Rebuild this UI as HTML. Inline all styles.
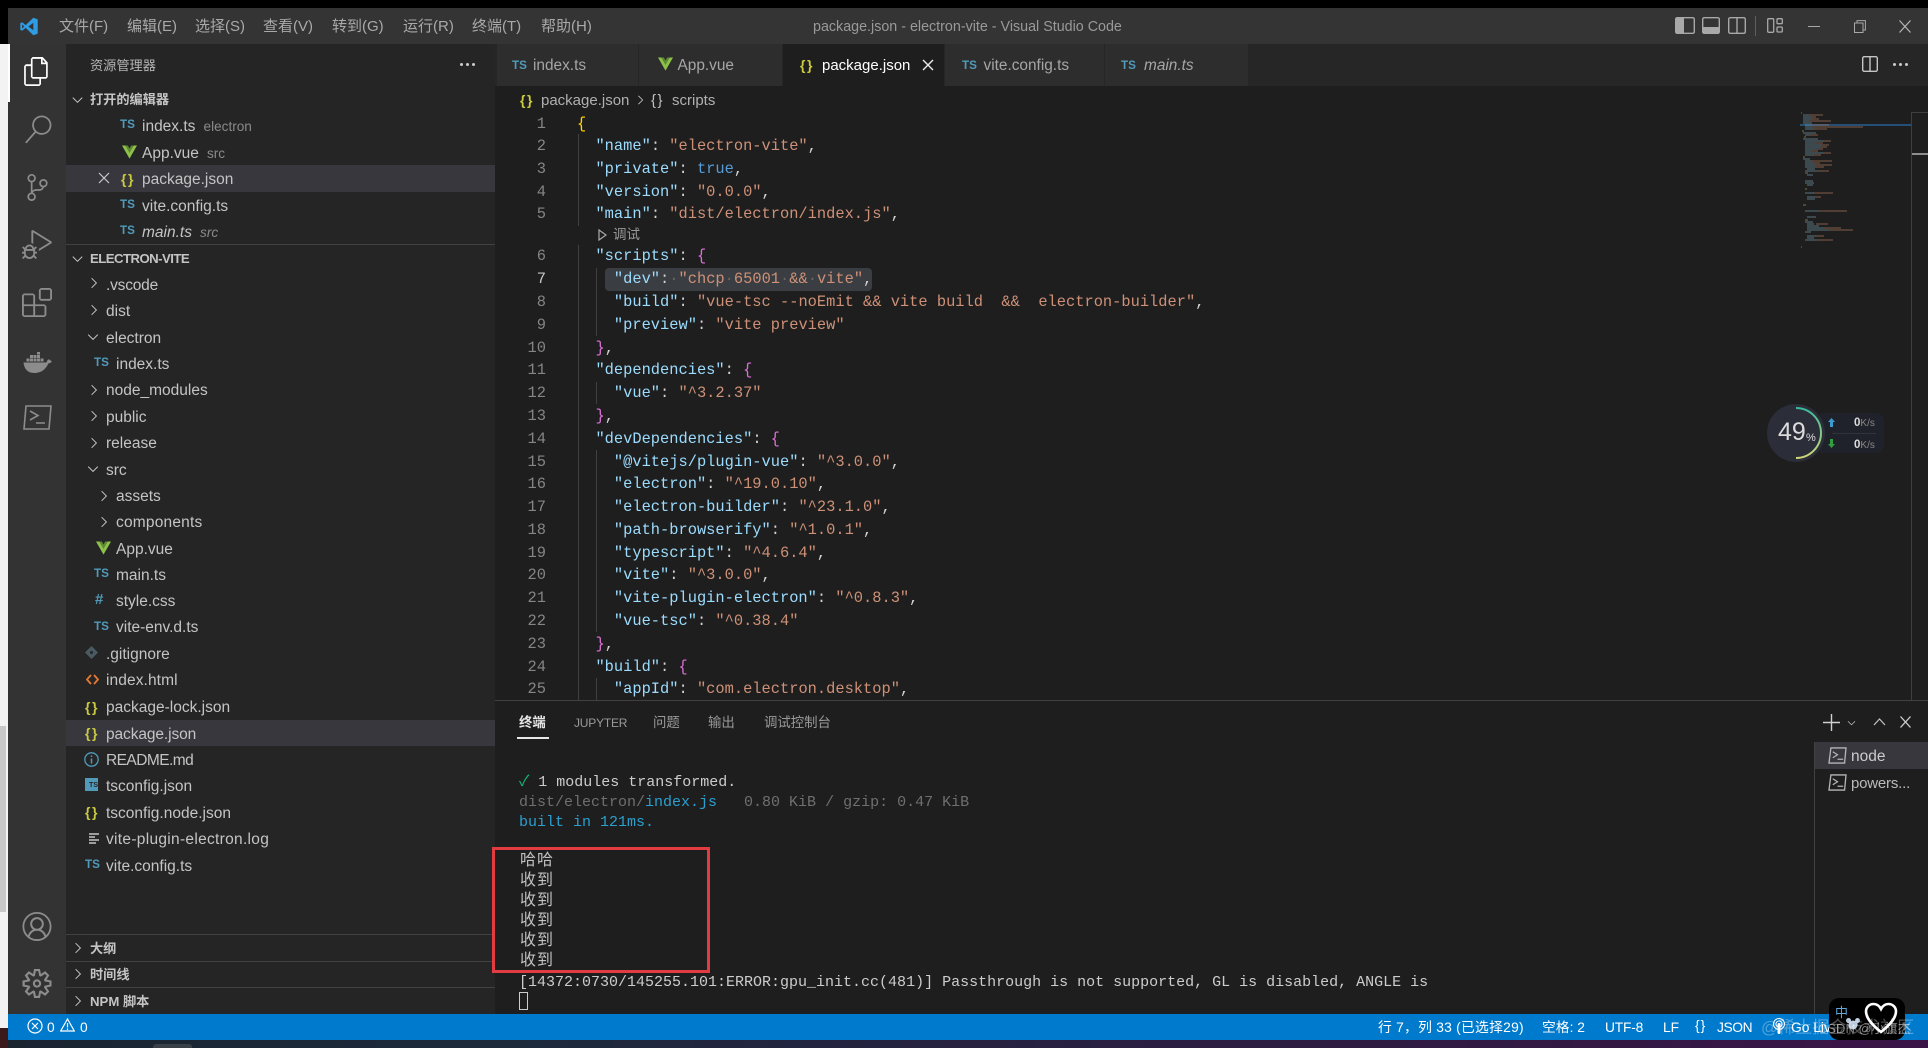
<!DOCTYPE html>
<html lang="zh-CN"><head><meta charset="utf-8"><title>package.json - electron-vite - Visual Studio Code</title>
<style>
*{box-sizing:border-box}
html,body{margin:0;padding:0;width:1928px;height:1048px;overflow:hidden;background:#000}
#a{position:relative;width:1928px;height:1048px;overflow:hidden;font-family:"Liberation Sans","Noto Sans CJK SC",sans-serif;color:#ccc}
#a div,#a span.x,#a svg{position:absolute}
.m{top:16px;font-size:15px;line-height:22px;color:#a9a9a9;white-space:nowrap}
.tab{top:44px;height:42px;background:#2d2d2d}
.tt{top:55px;font-size:15.4px;line-height:22px;color:#a6a6a6;white-space:nowrap}
.ts{font:bold 11.7px/16px "Liberation Sans",sans-serif;color:#519aba;white-space:nowrap;margin-top:1px}
.br{font:bold 14px/18px "Liberation Sans",sans-serif;color:#cbcb41;letter-spacing:1.5px;white-space:nowrap;margin-top:1px}
.t{font-size:15.5px;line-height:26px;height:26px;color:#c4c4c4;white-space:nowrap;margin-top:1px}
.h{font-size:13.2px;line-height:20px;font-weight:bold;color:#c4c4c4;white-space:nowrap;margin-top:1px}
.d{color:#8a8a8a;font-size:13.6px}
.c,.n{font-family:"Liberation Mono","Noto Sans CJK SC",monospace;font-size:15.38px;line-height:20px;white-space:pre;color:#d4d4d4;margin-top:.6px}
.c{left:577px}
.n{left:500px;width:46px;text-align:right;color:#858585}
.k{color:#9cdcfe}.s{color:#ce9178}.q{color:#ffd700}.o{color:#da70d6}.u{color:#569cd6}.w{color:#666}
.g{width:1px;background:#404040}
.v{font-family:"Liberation Mono","Noto Sans CJK SC",monospace;font-size:15px;line-height:20px;white-space:pre;color:#cccccc;left:519px;margin-top:1px}
.cj{left:520px;font-size:16px;letter-spacing:1px;color:#c0c0c0}
.pt{top:713px;font-size:13.4px;line-height:20px;color:#9a9a9a;white-space:nowrap}
.st{top:1018px;font-size:13.8px;line-height:20px;color:#fff;white-space:nowrap}
.sec{left:66px;width:429px;height:1px;background:#414141}
</style></head><body><div id="a">
<svg width="0" height="0" style="left:0;top:0"><defs>
<symbol id="cr" viewBox="0 0 10 14"><path d="M2 1l6 6-6 6" fill="none" stroke="#c5c5c5" stroke-width="1.2"/></symbol>
<symbol id="cd" viewBox="0 0 14 10"><path d="M1 2l6 6 6-6" fill="none" stroke="#c5c5c5" stroke-width="1.2"/></symbol>
<symbol id="vue" viewBox="0 0 16 14"><path d="M0 0h3.6L8 7.6 12.4 0H16L8 14z" fill="#8dc149"/><path d="M3.6 0h2.6L8 3.2 9.8 0h2.6L8 7.6z" fill="#5f8a33"/></symbol>
<symbol id="term" viewBox="0 0 20 18"><path d="M3 1h16l-1.5 16H1z" fill="none" stroke="#b5b5b5" stroke-width="1.4"/><path d="M5 5l5 3.2-5 3.2M10 13h6" fill="none" stroke="#b5b5b5" stroke-width="1.3"/></symbol>
</defs></svg>

<!-- outer window edges -->
<div style="left:0;top:44px;width:8px;height:986px;background:#f3f3f3"></div>
<div style="left:0;top:726px;width:6px;height:186px;background:#c8c8c8"></div>
<div style="left:0;top:1028px;width:8px;height:20px;background:#3a1a1a"></div>
<div style="left:8px;top:1040px;width:1920px;height:8px;background:linear-gradient(90deg,#1a2431 0%,#1c2a3c 25%,#2a1f42 60%,#3a1446 100%)"></div>
<div style="left:153px;top:1044px;width:39px;height:4px;background:#3a4048;border-radius:3px 3px 0 0"></div>

<!-- title bar -->
<div style="left:8px;top:8px;width:1920px;height:36px;background:#343434"></div>
<svg style="left:19px;top:17px" width="20" height="19" viewBox="0 0 24 24"><path d="M17.5 1L7.8 10.2 3.3 6.6 1 7.8v8.4l2.3 1.2 4.5-3.6 9.7 9.2L23 21V3z" fill="#2f9de4"/><path d="M17.5 7.2L11.2 12l6.3 4.8z" fill="#343434"/><path d="M3.3 9.3L6 12l-2.7 2.7z" fill="#343434"/></svg>
<div class="m" style="left:59px">文件(F)</div>
<div class="m" style="left:127px">编辑(E)</div>
<div class="m" style="left:195px">选择(S)</div>
<div class="m" style="left:263px">查看(V)</div>
<div class="m" style="left:332px">转到(G)</div>
<div class="m" style="left:403px">运行(R)</div>
<div class="m" style="left:472px">终端(T)</div>
<div class="m" style="left:541px">帮助(H)</div>
<div style="left:813px;top:16px;font-size:14.3px;line-height:22px;color:#999;white-space:nowrap">package.json - electron-vite - Visual Studio Code</div>
<svg style="left:1675px;top:17px" width="20" height="17" viewBox="0 0 20 17"><rect x=".7" y=".7" width="18.6" height="15.6" rx="1.5" fill="none" stroke="#a8a8a8" stroke-width="1.4"/><rect x="1" y="1" width="8" height="15" fill="#a8a8a8"/></svg>
<svg style="left:1702px;top:17px" width="18" height="17" viewBox="0 0 18 17"><rect x=".7" y=".7" width="16.6" height="15.6" rx="1.5" fill="none" stroke="#a8a8a8" stroke-width="1.4"/><rect x="1" y="10" width="16" height="6" fill="#a8a8a8"/></svg>
<svg style="left:1728px;top:17px" width="18" height="17" viewBox="0 0 18 17"><rect x=".7" y=".7" width="16.6" height="15.6" rx="1.5" fill="none" stroke="#a8a8a8" stroke-width="1.4"/><path d="M9 1v15" stroke="#a8a8a8" stroke-width="1.4"/></svg>
<div style="left:1755px;top:16px;width:1px;height:20px;background:#5f5f5f"></div>
<svg style="left:1767px;top:18px" width="16" height="15" viewBox="0 0 16 15"><rect x=".7" y=".7" width="6" height="13.6" rx="1" fill="none" stroke="#a8a8a8" stroke-width="1.3"/><rect x="10" y=".7" width="5.3" height="5" rx="1" fill="none" stroke="#a8a8a8" stroke-width="1.3"/><rect x="10" y="9" width="5.3" height="5" rx="1" fill="none" stroke="#a8a8a8" stroke-width="1.3"/></svg>
<div style="left:1808px;top:26px;width:12px;height:1px;background:#a8a8a8"></div>
<svg style="left:1854px;top:20px" width="12" height="13" viewBox="0 0 12 13"><rect x=".5" y="3" width="8.5" height="9.5" fill="none" stroke="#a8a8a8"/><path d="M3 3V.6h8.4V10H9" fill="none" stroke="#a8a8a8"/></svg>
<svg style="left:1899px;top:20px" width="12" height="13" viewBox="0 0 12 13"><path d="M.5.5l11 12M11.5.5l-11 12" stroke="#b5b5b5" stroke-width="1.2"/></svg>

<!-- activity bar -->
<div style="left:8px;top:44px;width:58px;height:970px;background:#333"></div>
<div style="left:8px;top:44px;width:2px;height:58px;background:#fff"></div>
<svg style="left:23px;top:57px" width="27" height="29" viewBox="0 0 24 24" preserveAspectRatio="none"><path fill="#fff" d="M17.5 0h-9L7 1.5V6H2.5L1 7.5v15.07L2.5 24h12.07L16 22.57V18h4.7l1.3-1.43V4.5L17.5 0zm0 2.12l2.38 2.38H17.5V2.12zm-3 20.38h-12v-15H7v9.07L8.5 18h6v4.5zm6-6h-12v-15H16V6h4.5v10.5z"/></svg>
<svg style="left:24px;top:115px" width="28" height="29" viewBox="0 0 24 24"><path fill="#8c8c8c" d="M15.25 0a8.25 8.25 0 0 0-6.18 13.72L1 22.88l1.12 1 8.05-9.12A8.251 8.251 0 1 0 15.25.01V0zm0 15a6.75 6.75 0 1 1 0-13.5 6.75 6.75 0 0 1 0 13.5z"/></svg>
<svg style="left:24px;top:173px" width="27" height="29" viewBox="0 0 24 24"><path fill="#8c8c8c" d="M21.007 8.222A3.738 3.738 0 0 0 15.045 5.2a3.737 3.737 0 0 0 1.156 6.583 2.988 2.988 0 0 1-2.668 1.67h-2.99a4.456 4.456 0 0 0-2.989 1.165V7.4a3.737 3.737 0 1 0-1.494 0v9.117a3.776 3.776 0 1 0 1.816.099 2.99 2.99 0 0 1 2.668-1.667h2.99a4.484 4.484 0 0 0 4.223-3.039 3.736 3.736 0 0 0 3.25-3.687zM4.565 3.738a2.242 2.242 0 1 1 4.484 0 2.242 2.242 0 0 1-4.484 0zm4.484 16.441a2.242 2.242 0 1 1-4.484 0 2.242 2.242 0 0 1 4.484 0zm8.221-9.715a2.242 2.242 0 1 1 0-4.485 2.242 2.242 0 0 1 0 4.485z"/></svg>
<svg style="left:22px;top:230px" width="30" height="29" viewBox="0 0 24 24" preserveAspectRatio="none"><path fill="#8c8c8c" d="M10.94 13.5l-1.32 1.32a3.73 3.73 0 0 0-7.24 0L1.06 13.5 0 14.56l1.72 1.72-.22.22V18H0v1.5h1.5v.08c.077.489.214.966.41 1.42L0 22.94 1.06 24l1.65-1.65A4.308 4.308 0 0 0 6 24a4.31 4.31 0 0 0 3.29-1.65L10.94 24 12 22.94 10.09 21c.198-.464.336-.951.41-1.45v-.1H12V18h-1.5v-1.5l-.22-.22L12 14.56l-1.06-1.06zM6 13.5a2.25 2.25 0 0 1 2.25 2.25h-4.5A2.25 2.25 0 0 1 6 13.5zm3 6a3.33 3.33 0 0 1-3 3 3.33 3.33 0 0 1-3-3v-2.25h6v2.25zm14.76-9.9v1.26L13.5 17.37V15.6l8.5-5.37L9 2v9.46a5.07 5.07 0 0 0-1.5-.72V.63L8.64 0l15.12 9.6z"/></svg>
<svg style="left:22px;top:288px" width="30" height="29" viewBox="0 0 24 24" preserveAspectRatio="none"><path fill="#8c8c8c" d="M13.5 1.5L15 0h7.5L24 1.5V9l-1.5 1.5H15L13.5 9V1.5zm1.5 0V9h7.5V1.5H15zM0 15V6l1.5-1.5H9L10.5 6v7.5H18l1.5 1.5v7.5L18 24H1.5L0 22.5V15zm9-1.5V6H1.5v7.5H9zM9 15H1.5v7.5H9V15zm1.5 7.5H18V15h-7.5v7.5z"/></svg>
<svg style="left:23px;top:352px" width="29" height="21" viewBox="0 0 29 21"><path fill="#8c8c8c" d="M.5 10.5h22.3c1-.2 1.5-1.2 1.5-2.3l1.5-1 3 2.2c-.7 1.3-2 2-3.5 2.1C23 17 18.500 21 11 21 4.500 21 1 16.500.5 10.500z"/><g fill="#8c8c8c"><rect x="3.500" y="6.500" width="3" height="3"/><rect x="7" y="6.500" width="3" height="3"/><rect x="10.500" y="6.500" width="3" height="3"/><rect x="14" y="6.500" width="3" height="3"/><rect x="7" y="3" width="3" height="3"/><rect x="10.500" y="3" width="3" height="3"/><rect x="14" y="3" width="3" height="3"/><rect x="14" y="0" width="3" height="2.500"/><rect x="17.500" y="6.500" width="3" height="3"/></g></svg>
<svg style="left:23px;top:405px" width="29" height="25" viewBox="0 0 29 25"><path d="M3 1h25l-2 23H1z" fill="none" stroke="#8c8c8c" stroke-width="1.6"/><path d="M7 6l8 4.500-8 4.500M13 18h9" fill="none" stroke="#8c8c8c" stroke-width="1.6"/></svg>
<svg style="left:22px;top:912px" width="30" height="29" viewBox="0 0 16 16"><path fill="#8c8c8c" d="M16 7.992C16 3.58 12.416 0 8 0S0 3.58 0 7.992c0 2.43 1.104 4.62 2.832 6.09.016.016.032.016.032.032.144.112.288.224.448.336.08.048.144.112.224.175A7.98 7.98 0 0 0 8.016 16a7.98 7.98 0 0 0 4.48-1.375c.08-.048.144-.111.224-.16.144-.111.304-.223.448-.335.016-.016.032-.016.032-.032 1.696-1.487 2.8-3.676 2.8-6.106zm-8 7.001c-1.504 0-2.88-.48-4.016-1.279.016-.128.048-.255.08-.383a4.17 4.17 0 0 1 .416-.991c.176-.304.384-.576.64-.816.24-.24.528-.463.816-.639.304-.176.624-.304.976-.4A4.15 4.15 0 0 1 8 10.342a4.185 4.185 0 0 1 2.928 1.166c.368.368.656.8.864 1.295.112.288.192.592.24.911A7.03 7.03 0 0 1 8 14.993zm-2.448-7.4a2.49 2.49 0 0 1-.208-1.024c0-.351.064-.703.208-1.023.144-.32.336-.607.576-.847.24-.24.528-.431.848-.575.32-.144.672-.208 1.024-.208.368 0 .704.064 1.024.208.32.144.608.336.848.575.24.24.432.528.576.847.144.32.208.672.208 1.023 0 .368-.064.704-.208 1.023a2.84 2.84 0 0 1-.576.848 2.84 2.84 0 0 1-.848.575 2.715 2.715 0 0 1-2.064 0 2.84 2.84 0 0 1-.848-.575 2.526 2.526 0 0 1-.56-.848zm7.424 5.306c0-.032-.016-.048-.016-.08a5.22 5.22 0 0 0-.688-1.406 4.883 4.883 0 0 0-1.088-1.135 5.207 5.207 0 0 0-1.04-.608 2.82 2.82 0 0 0 .464-.383 4.2 4.2 0 0 0 .624-.784 3.624 3.624 0 0 0 .528-1.934 3.71 3.71 0 0 0-.288-1.47 3.799 3.799 0 0 0-.816-1.199 3.845 3.845 0 0 0-1.2-.8 3.72 3.72 0 0 0-1.472-.287 3.72 3.72 0 0 0-1.472.288 3.631 3.631 0 0 0-1.2.815 3.84 3.84 0 0 0-.8 1.199 3.71 3.71 0 0 0-.288 1.47c0 .352.048.688.144 1.007.096.336.224.64.4.927.16.288.384.544.624.784.144.144.304.271.48.383a5.12 5.12 0 0 0-1.04.624c-.416.32-.784.703-1.088 1.119a4.999 4.999 0 0 0-.688 1.406c-.016.032-.016.064-.016.08C1.776 11.636.992 9.91.992 7.992.992 4.14 4.144.991 8 .991s7.008 3.149 7.008 7.001a6.96 6.96 0 0 1-2.032 4.907z"/></svg>
<svg style="left:22px;top:969px" width="30" height="29" viewBox="0 0 24 24"><path fill="#8c8c8c" d="M19.85 8.75l4.15.83v4.84l-4.15.83 2.35 3.52-3.43 3.43-3.52-2.35-.83 4.15H9.58l-.83-4.15-3.52 2.35-3.43-3.43 2.35-3.52L0 14.42V9.58l4.15-.83L1.8 5.23 5.23 1.8l3.52 2.35L9.58 0h4.84l.83 4.15 3.52-2.35 3.43 3.43-2.35 3.52zm-1.57 5.07l4-.81v-2l-4-.81-.54-1.3 2.29-3.43-1.43-1.43-3.43 2.29-1.3-.54-.81-4h-2l-.81 4-1.3.54-3.43-2.29-1.43 1.43L6.38 8.9l-.54 1.3-4 .81v2l4 .81.54 1.3-2.29 3.43 1.43 1.43 3.43-2.29 1.3.54.81 4h2l.81-4 1.3-.54 3.43 2.29 1.43-1.43-2.29-3.43.54-1.3zm-8.186-4.672A3.43 3.43 0 0 1 12 8.57 3.44 3.44 0 0 1 15.43 12a3.43 3.43 0 1 1-5.336-2.852zm.956 4.274c.281.188.612.288.95.288A1.7 1.7 0 0 0 13.71 12a1.71 1.71 0 1 0-2.66 1.422z"/></svg>

<!-- sidebar -->
<div style="left:66px;top:44px;width:429px;height:970px;background:#252526"></div>
<div style="left:90px;top:54.500px;font-size:13.2px;line-height:22px;color:#b5b5b5">资源管理器</div>
<div style="left:460px;top:62.500px;width:3px;height:3px;background:#ccc;border-radius:50%"></div>
<div style="left:466px;top:62.500px;width:3px;height:3px;background:#ccc;border-radius:50%"></div>
<div style="left:472px;top:62.500px;width:3px;height:3px;background:#ccc;border-radius:50%"></div>
<svg style="left:72px;top:96px" width="11" height="8"><use href="#cd"/></svg>
<div class="h" style="left:90px;top:89px">打开的编辑器</div>
<div class="ts" style="left:120px;top:116px">TS</div><div class="t" style="left:142px;top:112.500px">index.ts <span class="d">&nbsp;electron</span></div>
<svg style="left:122px;top:145px" width="15" height="14"><use href="#vue"/></svg><div class="t" style="left:142px;top:139.500px">App.vue <span class="d">&nbsp;src</span></div>
<div style="left:66px;top:165px;width:429px;height:27px;background:#37373d"></div>
<svg style="left:98px;top:172px" width="12" height="12" viewBox="0 0 12 12"><path d="M1 1l10 10M11 1L1 11" stroke="#ccc" stroke-width="1.2"/></svg>
<div class="br" style="left:121px;top:169px">{}</div><div class="t" style="left:142px;top:165.500px">package.json</div>
<div class="ts" style="left:120px;top:196px">TS</div><div class="t" style="left:142px;top:192.500px">vite.config.ts</div>
<div class="ts" style="left:120px;top:222px">TS</div><div class="t" style="left:142px;top:219px"><i>main.ts</i> <span class="d"><i>&nbsp;src</i></span></div>
<div class="sec" style="top:244px"></div>
<svg style="left:72px;top:255px" width="11" height="8"><use href="#cd"/></svg>
<div class="h" style="left:90px;top:248px;letter-spacing:-.55px">ELECTRON-VITE</div>

<svg style="left:90px;top:277px" width="8" height="12"><use href="#cr"/></svg><div class="t" style="left:106px;top:271.500px;letter-spacing:-.2px">.vscode</div>
<svg style="left:90px;top:304px" width="8" height="12"><use href="#cr"/></svg><div class="t" style="left:106px;top:298px">dist</div>
<svg style="left:87px;top:333px" width="12" height="8"><use href="#cd"/></svg><div class="t" style="left:106px;top:324.500px">electron</div>
<div class="ts" style="left:94px;top:354px">TS</div><div class="t" style="left:116px;top:350.500px">index.ts</div>
<svg style="left:90px;top:384px" width="8" height="12"><use href="#cr"/></svg><div class="t" style="left:106px;top:377px">node_modules</div>
<svg style="left:90px;top:410px" width="8" height="12"><use href="#cr"/></svg><div class="t" style="left:106px;top:403.500px">public</div>
<svg style="left:90px;top:437px" width="8" height="12"><use href="#cr"/></svg><div class="t" style="left:106px;top:429.500px">release</div>
<svg style="left:87px;top:465px" width="12" height="8"><use href="#cd"/></svg><div class="t" style="left:106px;top:457px">src</div>
<svg style="left:100px;top:490px" width="8" height="12"><use href="#cr"/></svg><div class="t" style="left:116px;top:483px">assets</div>
<svg style="left:100px;top:516px" width="8" height="12"><use href="#cr"/></svg><div class="t" style="left:116px;top:509px;letter-spacing:.2px">components</div>
<svg style="left:96px;top:541px" width="15" height="14"><use href="#vue"/></svg><div class="t" style="left:116px;top:536px">App.vue</div>
<div class="ts" style="left:94px;top:565px">TS</div><div class="t" style="left:116px;top:561.500px">main.ts</div>
<div style="left:95px;top:590px;font:bold 15px/20px 'Liberation Sans',sans-serif;color:#519aba">#</div><div class="t" style="left:116px;top:588px">style.css</div>
<div class="ts" style="left:94px;top:618px">TS</div><div class="t" style="left:116px;top:614px">vite-env.d.ts</div>
<svg style="left:85px;top:646px" width="13" height="13" viewBox="0 0 13 13"><path d="M6.500 0L13 6.500 6.500 13 0 6.500z" fill="#4a5a62"/><circle cx="6.500" cy="6.500" r="1.500" fill="#252526"/></svg><div class="t" style="left:106px;top:640.500px">.gitignore</div>
<svg style="left:86px;top:674px" width="13" height="11" viewBox="0 0 13 11"><path d="M5 1L1 5.500 5 10M8 1l4 4.500L8 10" fill="none" stroke="#e37933" stroke-width="1.800"/></svg><div class="t" style="left:106px;top:667px;letter-spacing:.1px">index.html</div>
<div class="br" style="left:85px;top:697px">{}</div><div class="t" style="left:106px;top:694px">package-lock.json</div>
<div style="left:66px;top:720px;width:429px;height:26px;background:#37373d"></div>
<div class="br" style="left:85px;top:723px">{}</div><div class="t" style="left:106px;top:720.500px;letter-spacing:-.1px">package.json</div>
<svg style="left:84px;top:752px" width="15" height="15" viewBox="0 0 15 15"><circle cx="7.500" cy="7.500" r="6.700" fill="none" stroke="#519aba" stroke-width="1.300"/><path d="M7.500 6.500v5M7.500 3.500v1.500" stroke="#519aba" stroke-width="1.500"/></svg><div class="t" style="left:106px;top:746.500px;letter-spacing:-.55px">README.md</div>
<div style="left:85px;top:778px;width:13px;height:13px;background:#519aba;color:#252526;font:bold 7px/16px 'Liberation Sans',sans-serif;text-align:right">TS</div><div class="t" style="left:106px;top:773px">tsconfig.json</div>
<div class="br" style="left:85px;top:802px">{}</div><div class="t" style="left:106px;top:799.500px">tsconfig.node.json</div>
<svg style="left:89px;top:833px" width="10" height="11" viewBox="0 0 10 11"><path d="M0 1h10M0 4h6M0 7h10M0 10h7" stroke="#c5c5c5" stroke-width="1.500"/></svg><div class="t" style="left:106px;top:826px;letter-spacing:.3px">vite-plugin-electron.log</div>
<div class="ts" style="left:85px;top:856px">TS</div><div class="t" style="left:106px;top:853px">vite.config.ts</div>

<div class="sec" style="top:934px"></div>
<svg style="left:74px;top:942px" width="8" height="12"><use href="#cr"/></svg><div class="h" style="left:90px;top:938px">大纲</div>
<div class="sec" style="top:961px"></div>
<svg style="left:74px;top:968px" width="8" height="12"><use href="#cr"/></svg><div class="h" style="left:90px;top:964px">时间线</div>
<div class="sec" style="top:987px"></div>
<svg style="left:74px;top:995px" width="8" height="12"><use href="#cr"/></svg><div class="h" style="left:90px;top:991px">NPM 脚本</div>

<!-- editor -->
<div style="left:495px;top:44px;width:1433px;height:42px;background:#262627"></div>
<div class="tab" style="left:497px;width:141px"></div>
<div class="tab" style="left:639px;width:143px"></div>
<div class="tab" style="left:783px;width:161px;background:#1e1e1e"></div>
<div class="tab" style="left:945px;width:159px"></div>
<div class="tab" style="left:1105px;width:143px"></div>
<div class="ts" style="left:512px;top:57px">TS</div><div class="tt" style="left:533px">index.ts</div>
<svg style="left:658px;top:57px" width="15" height="14"><use href="#vue"/></svg><div class="tt" style="left:677.500px">App.vue</div>
<div class="br" style="left:800px;top:55px">{}</div><div class="tt" style="left:822px;color:#fff;font-size:15px">package.json</div>
<svg style="left:922px;top:59px" width="12" height="12" viewBox="0 0 12 12"><path d="M1 1l10 10M11 1L1 11" stroke="#eee" stroke-width="1.400"/></svg>
<div class="ts" style="left:962px;top:57px">TS</div><div class="tt" style="left:983.500px">vite.config.ts</div>
<div class="ts" style="left:1121px;top:57px">TS</div><div class="tt" style="left:1144px"><i>main.ts</i></div>
<svg style="left:1862px;top:56px" width="16" height="16" viewBox="0 0 16 16"><rect x=".7" y=".7" width="14.600" height="14.600" rx="1.500" fill="none" stroke="#c5c5c5" stroke-width="1.400"/><path d="M8 1v14" stroke="#c5c5c5" stroke-width="1.400"/></svg>
<div style="left:1893px;top:62.500px;width:3px;height:3px;background:#ccc;border-radius:50%"></div>
<div style="left:1899px;top:62.500px;width:3px;height:3px;background:#ccc;border-radius:50%"></div>
<div style="left:1905px;top:62.500px;width:3px;height:3px;background:#ccc;border-radius:50%"></div>

<div style="left:495px;top:86px;width:1433px;height:928px;background:#1e1e1e"></div>
<div class="br" style="left:520px;top:89.500px">{}</div>
<div style="left:541px;top:89.500px;font-size:15px;line-height:22px;color:#b0b0b0">package.json</div>
<svg style="left:637px;top:94px" width="7" height="12"><use href="#cr"/></svg>
<div style="left:651px;top:89.500px;font-size:15px;line-height:22px;color:#c0c0c0;letter-spacing:1.500px">{}</div>
<div style="left:672px;top:89.500px;font-size:15px;line-height:22px;color:#b0b0b0">scripts</div>

<!-- indent guides -->
<div class="g" style="left:578px;top:134px;height:92px"></div>
<div class="g" style="left:578px;top:245px;height:456px"></div>
<div class="g" style="left:596px;top:268px;height:68px"></div>
<div class="g" style="left:596px;top:382px;height:22px"></div>
<div class="g" style="left:596px;top:450px;height:182px"></div>
<div class="g" style="left:596px;top:678px;height:23px"></div>
<div style="left:605px;top:268px;width:267px;height:23px;background:#3a3d41;border-radius:4px"></div>

<div class="n" style="top:113px">1</div><div class="c" style="top:113px"><span class="q">{</span></div>
<div class="n" style="top:135.600px">2</div><div class="c" style="top:135.600px">  <span class="k">"name"</span>: <span class="s">"electron-vite"</span>,</div>
<div class="n" style="top:158.400px">3</div><div class="c" style="top:158.400px">  <span class="k">"private"</span>: <span class="u">true</span>,</div>
<div class="n" style="top:181px">4</div><div class="c" style="top:181px">  <span class="k">"version"</span>: <span class="s">"0.0.0"</span>,</div>
<div class="n" style="top:203.600px">5</div><div class="c" style="top:203.600px">  <span class="k">"main"</span>: <span class="s">"dist/electron/index.js"</span>,</div>
<svg style="left:598px;top:229px" width="9" height="12" viewBox="0 0 9 12"><path d="M1 1l7 5-7 5z" fill="none" stroke="#aaa" stroke-width="1.200"/></svg>
<div style="left:613px;top:225px;font-size:13.500px;line-height:20px;color:#999">调试</div>
<div class="n" style="top:245.700px">6</div><div class="c" style="top:245.700px">  <span class="k">"scripts"</span>: <span class="o">{</span></div>
<div class="n" style="top:268.500px;color:#c6c6c6">7</div><div class="c" style="top:268.500px">    <span class="k">"dev"</span>:<span class="w">·</span><span class="s">"chcp</span><span class="w">·</span><span class="s">65001</span><span class="w">·</span><span class="s">&amp;&amp;</span><span class="w">·</span><span class="s">vite"</span>,</div>
<div class="n" style="top:291.300px">8</div><div class="c" style="top:291.300px">    <span class="k">"build"</span>: <span class="s">"vue-tsc --noEmit &amp;&amp; vite build  &amp;&amp;  electron-builder"</span>,</div>
<div class="n" style="top:314px">9</div><div class="c" style="top:314px">    <span class="k">"preview"</span>: <span class="s">"vite preview"</span></div>
<div class="n" style="top:337px">10</div><div class="c" style="top:337px">  <span class="o">}</span>,</div>
<div class="n" style="top:359.600px">11</div><div class="c" style="top:359.600px">  <span class="k">"dependencies"</span>: <span class="o">{</span></div>
<div class="n" style="top:382.500px">12</div><div class="c" style="top:382.500px">    <span class="k">"vue"</span>: <span class="s">"^3.2.37"</span></div>
<div class="n" style="top:405.300px">13</div><div class="c" style="top:405.300px">  <span class="o">}</span>,</div>
<div class="n" style="top:428px">14</div><div class="c" style="top:428px">  <span class="k">"devDependencies"</span>: <span class="o">{</span></div>
<div class="n" style="top:451px">15</div><div class="c" style="top:451px">    <span class="k">"@vitejs/plugin-vue"</span>: <span class="s">"^3.0.0"</span>,</div>
<div class="n" style="top:473.500px">16</div><div class="c" style="top:473.500px">    <span class="k">"electron"</span>: <span class="s">"^19.0.10"</span>,</div>
<div class="n" style="top:496.500px">17</div><div class="c" style="top:496.500px">    <span class="k">"electron-builder"</span>: <span class="s">"^23.1.0"</span>,</div>
<div class="n" style="top:519.300px">18</div><div class="c" style="top:519.300px">    <span class="k">"path-browserify"</span>: <span class="s">"^1.0.1"</span>,</div>
<div class="n" style="top:542px">19</div><div class="c" style="top:542px">    <span class="k">"typescript"</span>: <span class="s">"^4.6.4"</span>,</div>
<div class="n" style="top:564.700px">20</div><div class="c" style="top:564.700px">    <span class="k">"vite"</span>: <span class="s">"^3.0.0"</span>,</div>
<div class="n" style="top:587.500px">21</div><div class="c" style="top:587.500px">    <span class="k">"vite-plugin-electron"</span>: <span class="s">"^0.8.3"</span>,</div>
<div class="n" style="top:610.300px">22</div><div class="c" style="top:610.300px">    <span class="k">"vue-tsc"</span>: <span class="s">"^0.38.4"</span></div>
<div class="n" style="top:633px">23</div><div class="c" style="top:633px">  <span class="o">}</span>,</div>
<div class="n" style="top:656px">24</div><div class="c" style="top:656px">  <span class="k">"build"</span>: <span class="o">{</span></div>
<div class="n" style="top:678.600px">25</div><div class="c" style="top:678.600px">    <span class="k">"appId"</span>: <span class="s">"com.electron.desktop"</span>,</div>

<!-- minimap -->
<div style="left:1800px;top:124px;width:111px;height:2px;background:#264f78"></div>
<svg style="left:1800px;top:110px" width="72" height="140" viewBox="1800 110 72 140" fill="none" stroke-width="1">
<path stroke="#6e95a6" opacity=".75" d="M1803 115h6M1803 117h9M1803 119h9M1803 121h6M1803 123h9M1805 125h6M1805 127h8M1805 129h9M1803 133h13M1805 135h5M1803 139h15M1805 141h19M1805 143h10M1805 145h17M1805 147h16M1805 149h12M1805 151h6M1805 153h19M1805 155h9M1803 159h7M1805 161h7M1805 163h9M1805 165h11M1805 167h10M1807 169h8M1805 171h12M1807 175h6M1805 181h8M1805 183h9M1807 185h6M1805 193h9M1807 197h8M1807 199h8M1805 211h14M1807 217h9M1805 222h8M1807 224h7M1807 226h12M1807 228h16M1807 230h22M1805 232h6M1807 236h9M1807 238h7M1805 240h12"/>
<path stroke="#a4735c" opacity=".75" d="M1809 115h14M1812 117h4M1812 119h7M1809 121h22M1811 125h18M1813 127h50M1814 129h13M1810 135h8M1824 141h7M1815 143h8M1822 145h7M1821 147h6M1817 149h6M1811 151h7M1824 153h7M1814 155h7M1812 161h20M1814 163h6M1816 165h16M1815 167h9M1817 171h12M1813 193h20M1815 197h6M1819 211h28M1816 224h12M1823 228h18M1829 230h24M1816 236h8M1817 240h16"/>
<path stroke="#b9b26a" opacity=".6" d="M1801 113h1M1802 131h2M1804 137h2M1803 157h2M1805 173h3M1805 189h2M1803 205h3M1805 220h3M1801 247h1"/>
</svg>
<div style="left:1911px;top:112px;width:1px;height:589px;background:#3f3f3f"></div>
<div style="left:1912px;top:112px;width:16px;height:1px;background:#3f3f3f"></div>
<div style="left:1912px;top:153px;width:16px;height:2px;background:#8f8f8f"></div>

<!-- net speed widget -->
<div style="left:1820px;top:413px;width:64px;height:40px;background:#20222b;border-radius:0 8px 8px 0"></div>
<div style="left:1832px;top:433px;width:44px;height:1px;background:#30323c"></div>
<div style="left:1767px;top:404px;width:58px;height:58px;border-radius:50%;background:#2b2d38"></div>
<svg style="left:1767px;top:404px" width="58" height="58" viewBox="0 0 58 58"><defs><linearGradient id="rg" x1="0" y1="0" x2="0" y2="1"><stop offset="0" stop-color="#3bb99b"/><stop offset="1" stop-color="#cfd676"/></linearGradient></defs><path d="M29 4a25 25 0 0 1 0 50" fill="none" stroke="url(#rg)" stroke-width="2"/></svg>
<div style="left:1778px;top:417px;font-size:25px;line-height:30px;color:#dcdcdc">49</div>
<div style="left:1806px;top:431px;font-size:11px;line-height:14px;color:#dcdcdc">%</div>
<svg style="left:1828px;top:418px" width="7" height="9" viewBox="0 0 7 9"><path d="M3.500 0L7 4H5v5H2V4H0z" fill="#3c9ad0"/></svg>
<svg style="left:1828px;top:439px" width="7" height="9" viewBox="0 0 7 9"><path d="M3.500 9L7 5H5V0H2v5H0z" fill="#2f9e3f"/></svg>
<div style="left:1854px;top:415px;font-size:11.500px;line-height:16px;color:#ddd;font-weight:bold;white-space:nowrap">0<span style="font-weight:normal;font-size:10px;color:#888">K/s</span></div>
<div style="left:1854px;top:437px;font-size:11.500px;line-height:16px;color:#ddd;font-weight:bold;white-space:nowrap">0<span style="font-weight:normal;font-size:10px;color:#888">K/s</span></div>

<!-- panel -->
<div style="left:495px;top:701px;width:1433px;height:313px;background:#1e1e1e"></div>
<div style="left:495px;top:700px;width:1433px;height:1px;background:#414141"></div>
<div class="pt" style="left:519px;color:#e7e7e7;font-weight:bold">终端</div>
<div style="left:517px;top:737px;width:32px;height:1.500px;background:#e7e7e7"></div>
<div class="pt" style="left:574px;font-size:12px;letter-spacing:-.2px">JUPYTER</div>
<div class="pt" style="left:653px">问题</div>
<div class="pt" style="left:708px">输出</div>
<div class="pt" style="left:764px">调试控制台</div>
<svg style="left:1823px;top:714px" width="17" height="17" viewBox="0 0 17 17"><path d="M8.500 0v17M0 8.500h17" stroke="#d0d0d0" stroke-width="1.400"/></svg>
<svg style="left:1847px;top:720px" width="9" height="6"><use href="#cd"/></svg>
<svg style="left:1873px;top:717px" width="13" height="9"><path d="M1 8l5.500-6L12 8" fill="none" stroke="#c5c5c5" stroke-width="1.200"/></svg>
<svg style="left:1900px;top:716px" width="11" height="12" viewBox="0 0 11 12"><path d="M.5.5l10 11M10.500.5l-10 11" stroke="#d0d0d0" stroke-width="1.300"/></svg>
<div style="left:1814px;top:742px;width:1px;height:272px;background:#414141"></div>
<div style="left:1815px;top:742px;width:113px;height:27px;background:#37373d"></div>
<svg style="left:1828px;top:747px" width="19" height="17"><use href="#term"/></svg>
<div class="t" style="left:1851px;top:742.500px;font-size:15.500px;color:#ccc">node</div>
<svg style="left:1828px;top:774px" width="19" height="17"><use href="#term"/></svg>
<div class="t" style="left:1851px;top:769.500px;font-size:15px;letter-spacing:-.2px;color:#bbb">powers...</div>

<div class="v" style="top:772px"><span style="color:#0dbc79">✓</span> 1 modules transformed.</div>
<div class="v" style="top:792px;color:#6f6f6f">dist/electron/<span style="color:#2b9fce">index.js</span>   0.80 KiB / gzip: 0.47 KiB</div>
<div class="v" style="top:812px;color:#2b9fce">built in 121ms.</div>
<div class="v cj" style="top:850px">哈哈</div>
<div class="v cj" style="top:870px">收到</div>
<div class="v cj" style="top:890px">收到</div>
<div class="v cj" style="top:910px">收到</div>
<div class="v cj" style="top:930px">收到</div>
<div class="v cj" style="top:950px">收到</div>
<div class="v" style="top:972px">[14372:0730/145255.101:ERROR:gpu_init.cc(481)] Passthrough is not supported, GL is disabled, ANGLE is</div>
<div style="left:519px;top:992px;width:9px;height:18px;border:1px solid #ccc"></div>
<div style="left:492px;top:847px;width:218px;height:126px;border:3px solid #e03c42"></div>

<!-- status bar -->
<div style="left:8px;top:1014px;width:1920px;height:26px;background:#007acc"></div>
<svg style="left:27px;top:1018px" width="16" height="16" viewBox="0 0 16 16"><circle cx="8" cy="8" r="7" fill="none" stroke="#fff" stroke-width="1.200"/><path d="M5 5l6 6M11 5l-6 6" stroke="#fff" stroke-width="1.200"/></svg>
<div class="st" style="left:47px">0</div>
<svg style="left:60px;top:1018px" width="15" height="14" viewBox="0 0 15 14"><path d="M7.500 1L14.300 13H.7z" fill="none" stroke="#fff" stroke-width="1.200"/><path d="M7.500 5v4.500M7.500 10.500V12" stroke="#fff" stroke-width="1.200"/></svg>
<div class="st" style="left:80px">0</div>
<div class="st" style="left:1378px;letter-spacing:.25px">行 7，列 33 (已选择29)</div>
<div class="st" style="left:1542px">空格: 2</div>
<div class="st" style="left:1605px;letter-spacing:-.2px">UTF-8</div>
<div class="st" style="left:1663px">LF</div>
<div class="st" style="left:1695px;top:1015px;font-size:14px;letter-spacing:1px">{}</div>
<div class="st" style="left:1717px;letter-spacing:-.4px">JSON</div>
<svg style="left:1772px;top:1018px" width="14" height="17" viewBox="0 0 14 17"><circle cx="7" cy="6" r="5.500" fill="none" stroke="#fff"/><circle cx="7" cy="6" r="3" fill="none" stroke="#fff"/><rect x="5.500" y="5" width="3" height="11" rx="1.500" fill="#fff"/></svg>
<div class="st" style="left:1791px">Go Live</div>
<div style="left:1829px;top:998px;width:76px;height:42px;background:#000;border-radius:10px"></div>
<div style="left:1835px;top:1004px;font-size:13px;line-height:18px;color:#5fa7d8">中</div>
<svg style="left:1846px;top:1018px" width="14" height="12" viewBox="0 0 14 12"><circle cx="7" cy="7" r="4.500" fill="#b8c8dc"/><circle cx="2.500" cy="2.500" r="2.500" fill="#b8c8dc"/><circle cx="11.500" cy="2.500" r="2.500" fill="#b8c8dc"/></svg>
<svg style="left:1864px;top:1002px" width="34" height="32" viewBox="0 0 34 32"><path d="M17 30C6 21 2 15 2 9.500 2 5 5.500 2 9.500 2 13 2 15.500 4 17 7c1.500-3 4-5 7.500-5C28.500 2 32 5 32 9.500 32 15 28 21 17 30z" fill="none" stroke="#fff" stroke-width="2.600"/></svg>
<div style="left:1761px;top:1018px;font-size:17px;line-height:20px;color:rgba(255,255,255,.3);white-space:nowrap">@稀土掘金技术社区</div>
<div style="left:1818px;top:1020px;font-size:13px;line-height:18px;color:rgba(255,255,255,.5);white-space:nowrap">CSDN @小旗杰</div>
</div></body></html>
